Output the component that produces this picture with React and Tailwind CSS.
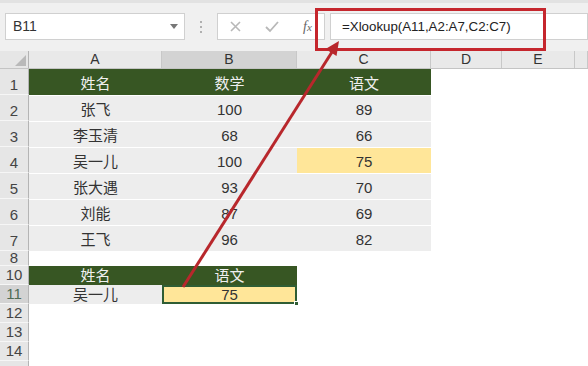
import React from 'react';

const cols = [
    { key: 'A', w: 'w-[133px]' },
    { key: 'B', w: 'w-[135px]' },
    { key: 'C', w: 'w-[134px]' },
    { key: 'D', w: 'w-[71px]' },
    { key: 'E', w: 'w-[73px]' },
    { key: 'F', w: 'flex-1' },
];

const scores = [
    ['张飞', '100', '89'],
    ['李玉清', '68', '66'],
    ['吴一儿', '100', '75'],
    ['张大遇', '93', '70'],
    ['刘能', '87', '69'],
    ['王飞', '96', '82'],
];

function RowHead({ n, h, active, lh = 'leading-[19px]' }) {
    return (
        <div
            className={`w-[29px] shrink-0 ${h} flex items-end justify-center border-r border-[#b4b4b4] border-b border-b-[#f6f6f6] text-[15px] ${lh} ${active ? 'bg-[#d3d3d3] text-[#4f6b55]' : 'bg-[#e6e6e6] text-[#444]'}`}
        >
            {n}
        </div>
    );
}

function Cell({ w, children, className = '' }) {
    return (
        <div className={`${w} shrink-0 flex items-end justify-center ${className}`}>
            {children}
        </div>
    );
}

export default function App() {
    return (
        <div className="w-[588px] h-[366px] bg-white relative overflow-hidden font-['Liberation_Sans','Noto_Sans_CJK_SC',sans-serif]">
            {/* formula bar */}
            <div className="h-[51px] bg-[#f0f0f0] border-t-[3px] border-[#e2e2e2] pt-[10px] flex items-start pl-[5px]">
                <div className="w-[180px] h-[27px] bg-white border border-[#d0d0d0] flex items-center justify-between pl-[7px] pr-[6px]">
                    <span className="text-[14px] text-[#333]">B11</span>
                    <span className="w-0 h-0 border-l-[4px] border-r-[4px] border-t-[5px] border-l-transparent border-r-transparent border-t-[#777]" />
                </div>
                <div className="w-[32px] h-[27px] flex flex-col items-center justify-center gap-[3px]">
                    <span className="w-[2px] h-[2px] bg-[#b0b0b0]" />
                    <span className="w-[2px] h-[2px] bg-[#b0b0b0]" />
                    <span className="w-[2px] h-[2px] bg-[#b0b0b0]" />
                </div>
                <div className="w-[108px] h-[27px] bg-white border border-[#d0d0d0] flex items-center">
                    <svg width="36" height="27" viewBox="0 0 36 27" className="shrink-0">
                        <path d="M13 9 L22 18 M22 9 L13 18" stroke="#b8b8b8" strokeWidth="1.6" fill="none" />
                    </svg>
                    <svg width="36" height="27" viewBox="0 0 36 27" className="shrink-0">
                        <path d="M12 14 L16 18 L24 9" stroke="#b8b8b8" strokeWidth="1.8" fill="none" />
                    </svg>
                    <span className="ml-[13px] font-['Liberation_Serif',serif] italic text-[14px] text-[#666]">
                        f<span className="text-[11px]">x</span>
                    </span>
                </div>
                <div className="ml-[5px] flex-1 h-[27px] bg-white border border-[#d0d0d0] flex items-center pl-[11px]">
                    <span className="text-[13.3px] text-[#222]">=Xlookup(A11,A2:A7,C2:C7)</span>
                </div>
            </div>

            {/* column headers */}
            <div className="flex h-[18px] border-b border-[#c4c4c4]">
                <div className="w-[29px] shrink-0 bg-[#e6e6e6] border-r border-[#b4b4b4] relative">
                    <span className="absolute right-[2px] bottom-[2px] w-0 h-0 border-l-[11px] border-t-[11px] border-l-transparent border-t-transparent border-b-0 border-r-0 [border-bottom:11px_solid_#b9b9b9]" />
                </div>
                {cols.map(c => (
                    <div
                        key={c.key}
                        className={`${c.w} shrink-0 flex items-center justify-center text-[14px] text-[#333] border-r border-[#c8c8c8] ${c.key === 'B' ? 'bg-[#d3d3d3]' : 'bg-[#e9e9e9]'}`}
                    >
                        {c.key === 'F' ? '' : c.key}
                    </div>
                ))}
            </div>

            {/* row 1 header */}
            <div className="flex h-[26px]">
                <RowHead n="1" h="h-[26px]" />
                <div className="flex bg-[#375623] text-[#f0f0f0] text-[15px] leading-[22px]">
                    <Cell w="w-[133px]">姓名</Cell>
                    <Cell w="w-[135px]">数学</Cell>
                    <Cell w="w-[134px]">语文</Cell>
                </div>
            </div>

            {/* rows 2-7 */}
            {scores.map((r, i) => (
                <div key={i} className="flex h-[26px]">
                    <RowHead n={String(i + 2)} h="h-[26px]" />
                    <div className="flex text-[15px] text-[#333] leading-[22px] border-t border-white">
                        <Cell w="w-[133px]" className="bg-[#ededed]">{r[0]}</Cell>
                        <Cell w="w-[135px]" className="bg-[#ededed]">{r[1]}</Cell>
                        <Cell w="w-[134px]" className={r[0] === '吴一儿' ? 'bg-[#ffe699]' : 'bg-[#ededed]'}>{r[2]}</Cell>
                    </div>
                </div>
            ))}

            {/* row 8 (row 9 hidden) */}
            <div className="flex h-[15px]">
                <RowHead n="8" h="h-[15px]" lh="leading-[15px]" />
            </div>

            {/* row 10 */}
            <div className="flex h-[19px]">
                <RowHead n="10" h="h-[19px]" />
                <div className="flex bg-[#375623] text-[#f0f0f0] text-[15px] leading-[19px]">
                    <Cell w="w-[133px]">姓名</Cell>
                    <Cell w="w-[135px]">语文</Cell>
                </div>
            </div>

            {/* row 11 */}
            <div className="flex h-[19px]">
                <RowHead n="11" h="h-[19px]" active />
                <div className="flex text-[15px] text-[#333] leading-[19px]">
                    <Cell w="w-[133px]" className="bg-[#ededed]">吴一儿</Cell>
                    <Cell w="w-[135px]" className="bg-[#ffe699] border-2 border-[#2f5d34] leading-[15px] relative">
                        75
                        <span className="absolute right-[-4px] bottom-[-4px] w-[5px] h-[5px] bg-[#2f5d34] border border-white" />
                    </Cell>
                </div>
            </div>

            {['12', '13', '14', ''].map((n, i) => (
                <div key={i} className="flex h-[19px]">
                    <RowHead n={n} h="h-[19px]" />
                </div>
            ))}

            {/* annotation: red box and arrow */}
            <div className="absolute left-[315px] top-[8px] w-[231px] h-[43px] border-[3px] border-[#c5262d]" />
            <svg className="absolute inset-0 pointer-events-none" width="588" height="366" viewBox="0 0 588 366">
                <line x1="183" y1="287" x2="332" y2="52" stroke="#b8272c" strokeWidth="3" />
                <polygon points="339,41 336.5,56 325.5,49" fill="#b8272c" />
            </svg>
        </div>
    );
}
